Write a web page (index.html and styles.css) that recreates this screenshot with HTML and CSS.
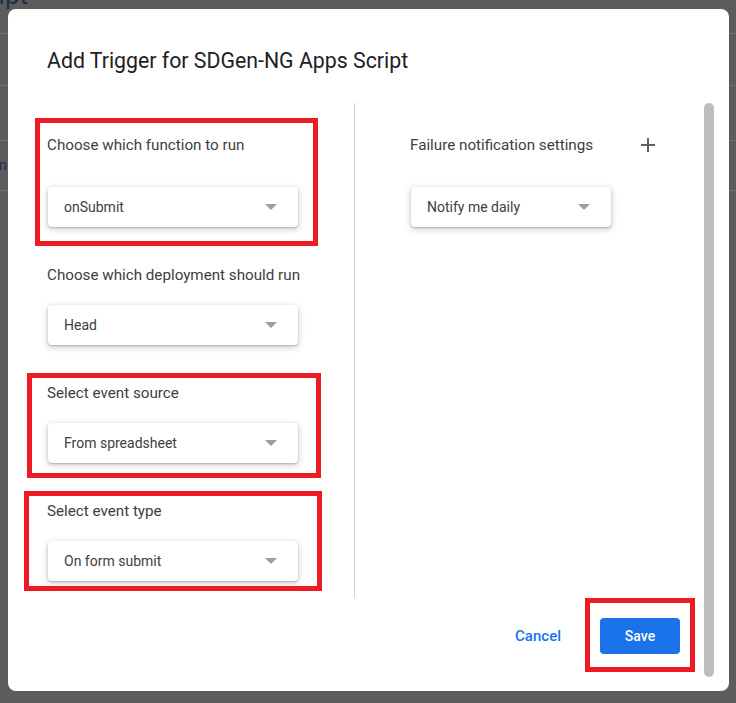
FILE: index.html
```html
<!DOCTYPE html>
<html>
<head>
<meta charset="utf-8">
<title>Add Trigger</title>
<link rel="stylesheet" href="styles.css">
</head>
<body>
<div class="page">
  <div class="page-title">Apps Script</div>
  <div class="page-side">n</div>
</div>

<div class="dialog">
  <h1 class="title">Add Trigger for SDGen-NG Apps Script</h1>
  <div class="main">
    <div class="content">
      <div class="columns">
        <div class="col-left">
          <div class="label first">Choose which function to run</div>
          <div class="select"><span>onSubmit</span><i class="caret"></i></div>

          <div class="label">Choose which deployment should run</div>
          <div class="select"><span>Head</span><i class="caret"></i></div>

          <div class="label">Select event source</div>
          <div class="select"><span>From spreadsheet</span><i class="caret"></i></div>

          <div class="label">Select event type</div>
          <div class="select"><span>On form submit</span><i class="caret"></i></div>
        </div>
        <div class="col-right">
          <div class="label-row">
            <div class="label">Failure notification settings</div>
            <svg class="plus" width="14" height="14" viewBox="0 0 14 14"><path d="M7 0v14M0 7h14" stroke="#5f6368" stroke-width="2" fill="none"/></svg>
          </div>
          <div class="select narrow"><span>Notify me daily</span><i class="caret"></i></div>
        </div>
      </div>
      <div class="footer">
        <button class="cancel">Cancel</button>
        <button class="save">Save</button>
      </div>
    </div>
    <div class="scrollbar"></div>
  </div>
</div>

<div class="mark m1"></div>
<div class="mark m2"></div>
<div class="mark m3"></div>
<div class="mark m4"></div>
</body>
</html>
```

FILE: styles.css
```css
html, body {
  margin: 0;
  padding: 0;
}
body {
  width: 736px;
  height: 703px;
  overflow: hidden;
  position: relative;
  background: #5a5a5a;
  font-family: Roboto, "Liberation Sans", sans-serif;
}
.page {
  position: absolute;
  inset: 0;
  background:
    linear-gradient(#707070, #707070) 0 33px / 100% 1px no-repeat,
    linear-gradient(#707070, #707070) 0 85px / 100% 1px no-repeat,
    linear-gradient(#707070, #707070) 0 140px / 100% 1px no-repeat,
    linear-gradient(#707070, #707070) 0 190px / 100% 1px no-repeat,
    #5c5c5c;
}
.page-title {
  position: absolute;
  right: calc(100% - 28px);
  top: -20px;
  font-size: 26px;
  color: #1c3148;
  white-space: nowrap;
}
.page-side {
  position: absolute;
  left: -1px;
  top: 157px;
  font-size: 14px;
  color: #1c2f47;
}
.dialog {
  position: absolute;
  left: 8px;
  top: 9px;
  width: 721px;
  height: 682px;
  background: #fff;
  border-radius: 8px;
  display: flex;
  flex-direction: column;
  box-sizing: border-box;
}
.title {
  margin: 0;
  padding: 38px 0 0 39px;
  height: 28px;
  line-height: 28px;
  font-size: 21.3px;
  font-weight: 400;
  color: #202124;
}
.main {
  margin-top: 28px;
  flex: 1;
  display: flex;
  padding-bottom: 14px;
}
.content {
  flex: 1;
  display: flex;
  flex-direction: column;
}
.scrollbar {
  width: 10px;
  background: #bdbdbd;
  border-radius: 5px;
  margin-right: 15px;
}
.columns {
  display: flex;
  height: 495px;
}
.col-left {
  box-sizing: border-box;
  width: 347px;
  padding: 32px 0 0 39px;
  border-right: 1px solid #d0d2d6;
}
.col-right {
  padding: 32px 0 0 55px;
}
.label {
  height: 20px;
  line-height: 20px;
  font-size: 15.2px;
  color: #3c4043;
  margin-bottom: 20px;
  white-space: nowrap;
}
.label.first {
  margin-bottom: 32px;
}
.label-row {
  width: 245px;
  display: flex;
  justify-content: space-between;
  align-items: center;
  margin-bottom: 32px;
}
.label-row .label {
  margin-bottom: 0;
}
.select {
  box-sizing: border-box;
  width: 250px;
  height: 40px;
  margin: 0 0 38px 1px;
  padding: 0 21px 0 16px;
  display: flex;
  align-items: center;
  justify-content: space-between;
  background: #fff;
  border-radius: 4px;
  box-shadow: 0 1px 2px rgba(60, 64, 67, 0.3), 0 2px 6px 1px rgba(60, 64, 67, 0.2);
  font-size: 14px;
  color: #3c4043;
}
.select.narrow {
  width: 200px;
}
.caret {
  width: 0;
  height: 0;
  border-left: 6px solid transparent;
  border-right: 6px solid transparent;
  border-top: 6px solid #9e9e9e;
}
.footer {
  flex: 1;
  display: flex;
  justify-content: flex-end;
  align-items: flex-start;
  padding: 20px 24px 0 0;
}
.footer button {
  font-family: Roboto, "Liberation Sans", sans-serif;
  font-size: 14px;
  font-weight: 500;
  border: none;
  cursor: pointer;
  height: 36px;
}
.footer .cancel {
  background: none;
  color: #1a73e8;
  padding: 0;
  margin-right: 39px;
  font-size: 15px;
}
.save {
  width: 80px;
  background: #1a73e8;
  color: #fff;
  border-radius: 4px;
  padding: 0;
}
.mark {
  position: absolute;
  box-sizing: border-box;
  border: 5px solid #ed1c24;
}
.m1 { left: 35px; top: 118px; width: 283px; height: 128px; }
.m2 { left: 27px; top: 373px; width: 294px; height: 105px; }
.m3 { left: 24px; top: 491px; width: 298px; height: 100px; }
.m4 { left: 585px; top: 598px; width: 110px; height: 74px; }
```
